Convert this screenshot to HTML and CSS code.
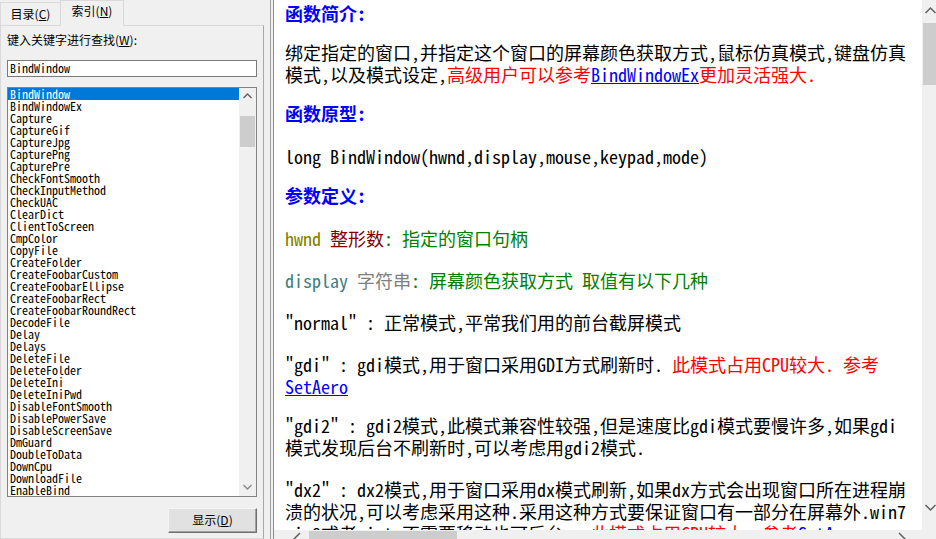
FILE: index.html
```html
<!DOCTYPE html>
<html lang="zh-CN">
<head>
<meta charset="utf-8">
<title>BindWindow</title>
<link rel="stylesheet" href="styles.css">
</head>
<body>
<div class="app">
  <div class="left">
    <div class="tabs">
      <div class="tab">目录(<u>C</u>)</div>
      <div class="tab active">索引(<u>N</u>)</div>
    </div>
    <div class="panel">
      <div class="lbl">键入关键字进行查找(<u>W</u>):</div>
      <div class="input">BindWindow</div>
      <div class="listbox">
        <ul class="items">
          <li class="sel">BindWindow</li>
          <li>BindWindowEx</li>
          <li>Capture</li>
          <li>CaptureGif</li>
          <li>CaptureJpg</li>
          <li>CapturePng</li>
          <li>CapturePre</li>
          <li>CheckFontSmooth</li>
          <li>CheckInputMethod</li>
          <li>CheckUAC</li>
          <li>ClearDict</li>
          <li>ClientToScreen</li>
          <li>CmpColor</li>
          <li>CopyFile</li>
          <li>CreateFolder</li>
          <li>CreateFoobarCustom</li>
          <li>CreateFoobarEllipse</li>
          <li>CreateFoobarRect</li>
          <li>CreateFoobarRoundRect</li>
          <li>DecodeFile</li>
          <li>Delay</li>
          <li>Delays</li>
          <li>DeleteFile</li>
          <li>DeleteFolder</li>
          <li>DeleteIni</li>
          <li>DeleteIniPwd</li>
          <li>DisableFontSmooth</li>
          <li>DisablePowerSave</li>
          <li>DisableScreenSave</li>
          <li>DmGuard</li>
          <li>DoubleToData</li>
          <li>DownCpu</li>
          <li>DownloadFile</li>
          <li>EnableBind</li>
        </ul>
        <div class="lscroll">
          <div class="arrow"><svg width="17" height="17" viewBox="0 0 17 17"><path d="M4.5 10 L8.5 6 L12.5 10" fill="none" stroke="#606060" stroke-width="1.4"/></svg></div>
          <div class="lthumb"></div>
          <div class="spacer"></div>
          <div class="arrow"><svg width="17" height="17" viewBox="0 0 17 17"><path d="M4.5 6 L8.5 10 L12.5 6" fill="none" stroke="#8a8a8a" stroke-width="1.4"/></svg></div>
        </div>
      </div>
      <div class="btnrow"><div class="btn">显示(<u>D</u>)</div></div>
    </div>
  </div>
  <div class="right">
    <div class="frame">
      <div class="viewport">
        <div class="doc">
          <h3 class="h">函数简介:</h3>
          <p>绑定指定的窗口,并指定这个窗口的屏幕颜色获取方式,鼠标仿真模式,键盘仿真模式,以及模式设定,<span class="red">高级用户可以参考</span><a class="lnk">BindWindowEx</a><span class="red">更加灵活强大.</span></p>
          <h3 class="h">函数原型:</h3>
          <p>long BindWindow(hwnd,display,mouse,keypad,mode)</p>
          <h3 class="h">参数定义:</h3>
          <p><span class="pn">hwnd</span> <span class="pt">整形数</span><span class="pd">: 指定的窗口句柄</span></p>
          <p><span class="pn2">display</span> <span class="pt2">字符串</span><span class="pd">: 屏幕颜色获取方式 取值有以下几种</span></p>
          <p>"normal" : 正常模式,平常我们用的前台截屏模式</p>
          <p class="tight">"gdi" : gdi模式,用于窗口采用GDI方式刷新时. <span class="red">此模式占用CPU较大. 参考</span><a class="lnk">SetAero</a></p>
          <p>"gdi2" : gdi2模式,此模式兼容性较强,但是速度比gdi模式要慢许多,如果gdi模式发现后台不刷新时,可以考虑用gdi2模式.</p>
          <p>"dx2" : dx2模式,用于窗口采用dx模式刷新,如果dx方式会出现窗口所在进程崩溃的状况,可以考虑采用这种.采用这种方式要保证窗口有一部分在屏幕外.win7 win8或者vista不需要移动也可后台.&nbsp; <span class="red">此模式占用CPU较大. 参考</span><a class="lnk">SetAero</a></p>
        </div>
        <div class="vbar">
          <div class="arrow"><svg width="17" height="17" viewBox="0 0 17 17"><path d="M3.5 13 L8.5 8 L13.5 13" fill="none" stroke="#606060" stroke-width="1.5"/></svg></div>
          <div class="vthumb"></div>
          <div class="spacer"></div>
          <div class="arrow down"><svg width="17" height="17" viewBox="0 0 17 17"><path d="M3.5 6 L8.5 11 L13.5 6" fill="none" stroke="#606060" stroke-width="1.5"/></svg></div>
        </div>
      </div>
      <div class="hbar">
        <div class="harrow"><svg width="17" height="17" viewBox="0 0 17 17"><path d="M11 3 L5 9 L11 15" fill="none" stroke="#606060" stroke-width="1.5"/></svg></div>
        <div class="hthumb"></div>
        <div class="spacer"></div>
        <div class="harrow"><svg width="17" height="17" viewBox="0 0 17 17"><path d="M6 3 L12 9 L6 15" fill="none" stroke="#606060" stroke-width="1.5"/></svg></div>
      </div>
    </div>
  </div>
</div>
</body>
</html>
```

FILE: styles.css
```css
html, body {
  margin: 0;
  padding: 0;
}

body {
  width: 936px;
  height: 539px;
  overflow: hidden;
  background: #f0f0f0;
  font-family: "Noto Sans CJK SC", "Liberation Sans", sans-serif;
  font-size: 12px;
  color: #000;
}

.app {
  display: flex;
  width: 939px;
  height: 539px;
}

/* ---------- left pane ---------- */
.left {
  width: 264px;
  flex: none;
  display: flex;
  flex-direction: column;
}

.tabs {
  display: flex;
  align-items: flex-end;
  height: 26px;
  margin-bottom: -1px;
  position: relative;
  z-index: 1;
}

.tab {
  box-sizing: border-box;
  width: 60px;
  height: 23px;
  margin-bottom: 1px;
  border: 1px solid #d9d9d9;
  border-bottom: none;
  border-right: none;
  background: #f0f0f0;
  text-align: center;
  line-height: 21px;
}

.tab.active {
  width: 64px;
  height: 26px;
  margin-bottom: 0;
  border-right: 1px solid #d9d9d9;
  line-height: 19px;
}

.panel {
  flex: 1;
  box-sizing: border-box;
  border: 1px solid #d9d9d9;
  border-right-color: #a8a8a8;
  padding: 6px 6px 0;
  display: flex;
  flex-direction: column;
}

.lbl {
  line-height: 16px;
  height: 16px;
}

.input {
  box-sizing: border-box;
  margin-top: 12px;
  height: 17px;
  border: 1px solid #7a7a7a;
  background: #fff;
  padding-left: 2px;
  font-family: "Noto Sans Mono CJK SC", "Liberation Mono", monospace;
  font-size: 12px;
  line-height: 14px;
}

.listbox {
  box-sizing: border-box;
  margin-top: 10px;
  height: 410px;
  border: 1px solid #828282;
  background: #fff;
  display: flex;
}

.items {
  list-style: none;
  margin: 0;
  padding: 0;
  flex: 1;
  font-family: "Noto Sans Mono CJK SC", "Liberation Mono", monospace;
  font-size: 12px;
  line-height: 12px;
}

.items li {
  height: 12px;
  padding-left: 2px;
  white-space: nowrap;
}

.items li.sel {
  background: #0078d7;
  color: #fff;
}

.lscroll {
  width: 17px;
  flex: none;
  background: #f0f0f0;
  display: flex;
  flex-direction: column;
}

.arrow {
  width: 17px;
  height: 17px;
  flex: none;
}

.arrow svg, .harrow svg {
  display: block;
}

.lthumb {
  margin: 11px 1px 0;
  height: 31px;
  background: #cdcdcd;
}

.spacer {
  flex: 1;
}

.btnrow {
  margin-top: 11px;
  display: flex;
  justify-content: flex-end;
}

.btn {
  box-sizing: border-box;
  width: 89px;
  height: 25px;
  border: 1px solid;
  border-color: #f4f4f4 #6f6f6f #6f6f6f #f4f4f4;
  box-shadow: inset -1px -1px 0 #a0a0a0;
  background: #e1e1e1;
  text-align: center;
  line-height: 22px;
}

/* ---------- right pane ---------- */
.right {
  margin-left: 6px;
  border-left: 1px solid #a0a0a0;
  padding-left: 2px;
  flex: none;
  display: flex;
}

.frame {
  width: 665px;
  border-left: 1px solid #8c8c8c;
  display: flex;
  flex-direction: column;
}

.viewport {
  display: flex;
  height: 530px;
}

.doc {
  width: 648px;
  box-sizing: border-box;
  padding: 2px 12px 0 11px;
  background: #fff;
  overflow: hidden;
  font-family: "Noto Sans Mono CJK SC", "Liberation Mono", monospace;
  font-size: 18px;
  line-height: 22px;
  color: #000;
}

.h {
  margin: -3px 0 21px;
  font-size: 18px;
  font-weight: bold;
  color: #0000ff;
}

.h:first-child {
  margin-top: 0;
  margin-bottom: 17px;
}

.doc p {
  margin: 0 0 20px;
}

.doc p.tight {
  margin-bottom: 17px;
}

.red {
  color: #ff0000;
}

.lnk {
  color: #0000ff;
  text-decoration: underline;
}

.pn { color: #808000; }
.pt { color: #800000; }
.pn2 { color: #408080; }
.pt2 { color: #808080; }
.pd { color: #008000; }

.vbar {
  width: 17px;
  flex: none;
  background: #f0f0f0;
  display: flex;
  flex-direction: column;
}

.vthumb {
  margin: 6px 1px 0;
  height: 62px;
  background: #cdcdcd;
}

.arrow.down {
  margin-bottom: 14px;
}

.hbar {
  height: 17px;
  background: #f0f0f0;
  display: flex;
  align-items: center;
  padding: 0 29px 0 15px;
}

.harrow {
  width: 17px;
  height: 17px;
  flex: none;
}

.hthumb {
  margin-left: 3px;
  width: 148px;
  height: 15px;
  background: #cdcdcd;
}
```
